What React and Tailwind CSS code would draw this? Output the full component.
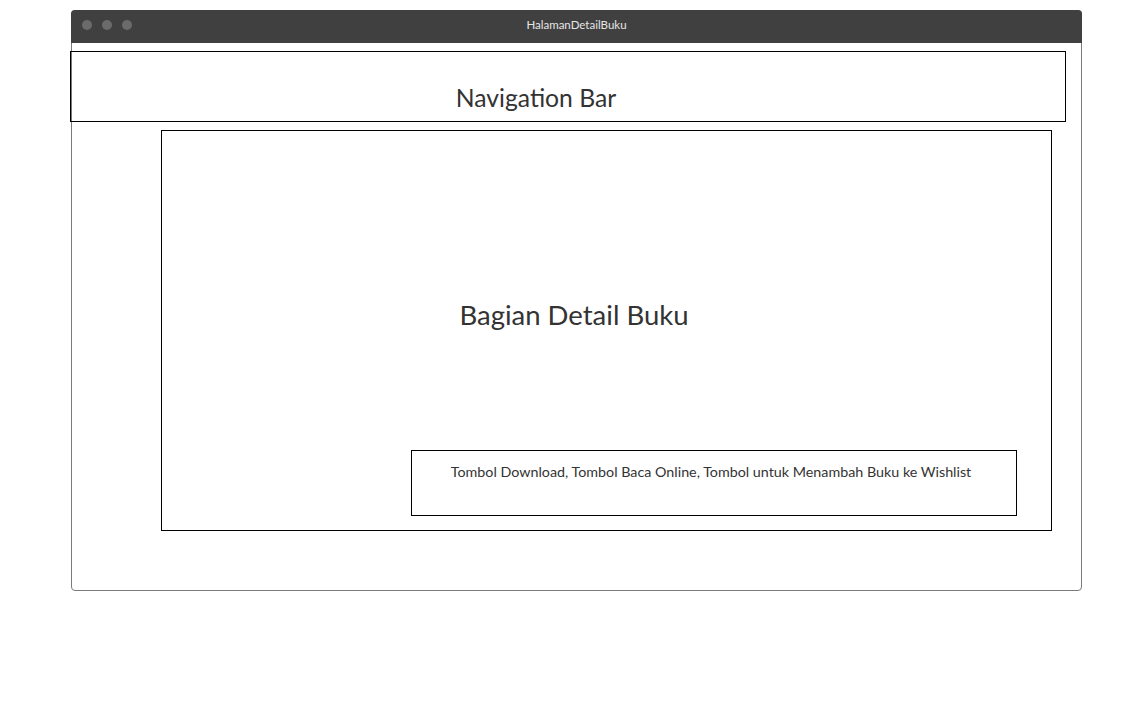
import React from "react";

// Wireframe: detail page for a book
const TrafficDot = () => <span className="block w-[10px] h-[10px] rounded-full bg-[#6b6b6b]" />;

export default function App() {
  return (
    <div className="w-[1141px] h-[710px] bg-white pl-[71px] pt-[10px]" style={{ fontFamily: "Lato, 'Open Sans', sans-serif" }}>
      <div className="w-[1011px] h-[581px] border border-[#7a7a7a] rounded-[4px] flex flex-col">
        {/* title bar */}
        <div className="relative h-[33px] -mx-px -mt-px bg-[#404040] rounded-t-[4px] flex items-center px-[11px] pb-[3px] gap-[10px]">
          <TrafficDot />
          <TrafficDot />
          <TrafficDot />
          <span className="absolute inset-0 pb-[3px] flex items-center justify-center text-[11.5px] text-[#e6e6e6]">
            HalamanDetailBuku
          </span>
        </div>

        {/* navigation bar */}
        <div className="-ml-[2px] mt-[8px] w-[996px] h-[71px] border border-black pt-[31px] pr-[64px] text-center text-[24.7px] leading-[30px] text-[#333333]">
          Navigation Bar
        </div>

        {/* detail section */}
        <div className="ml-[89px] mt-[8px] w-[891px] h-[401px] border border-black flex flex-col">
          <div className="pt-[167px] pr-[65px] text-center text-[27.5px] leading-[34px] text-[#333333]">
            Bagian Detail Buku
          </div>
          <div className="ml-[249px] mt-[118px] w-[606px] h-[66px] border border-black pt-[11px] pr-[6px] text-center text-[14.3px] leading-[20px] text-[#333333]">
            Tombol Download, Tombol Baca Online, Tombol untuk Menambah Buku ke Wishlist
          </div>
        </div>
      </div>
    </div>
  );
}
